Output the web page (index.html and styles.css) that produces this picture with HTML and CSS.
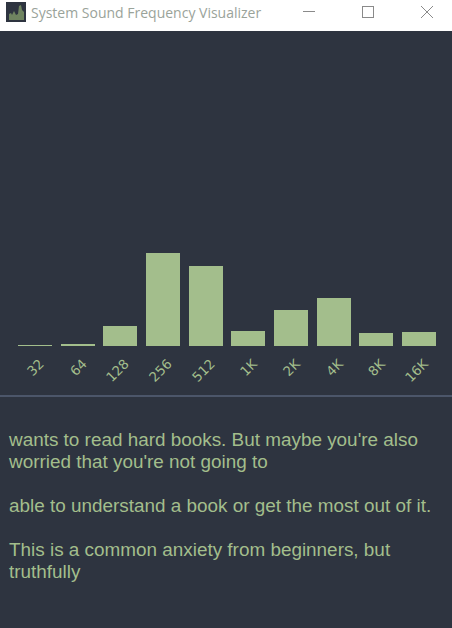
FILE: index.html
```html
<!DOCTYPE html>
<html lang="en">
<head>
    <meta charset="UTF-8">
    <meta name="viewport" content="width=device-width, initial-scale=1.0">
    <title>System Sound Frequency Visualizer</title>
    <link rel="stylesheet" href="styles.css">
</head>
<body>

<div class="titlebar">
    <svg class="app-icon" width="20" height="20" viewBox="0 0 20 20">
        <rect width="20" height="20" fill="#2e3440"/>
        <path d="M3 18V12L5 11L6 13L8 9L10 13L12 12L13 4L15 3L16 8L18 10V18Z" fill="#6f8460"/>
    </svg>
    <span class="title">System Sound Frequency Visualizer</span>
    <div class="controls">
        <svg width="12" height="12" viewBox="0 0 12 12"><path d="M0 5.5H12" stroke="#8a8a8a" fill="none"/></svg>
        <svg width="12" height="12" viewBox="0 0 12 12"><rect x="0.5" y="0.5" width="11" height="11" stroke="#8a8a8a" fill="none"/></svg>
        <svg width="12" height="12" viewBox="0 0 12 12"><path d="M0 0L12 12M12 0L0 12" stroke="#8a8a8a" fill="none"/></svg>
    </div>
</div>

<div class="chart">
    <div class="col"><div class="bar" style="height: 1px"></div><span class="label">32</span></div>
    <div class="col"><div class="bar" style="height: 2px"></div><span class="label">64</span></div>
    <div class="col"><div class="bar" style="height: 20px"></div><span class="label">128</span></div>
    <div class="col"><div class="bar" style="height: 93px"></div><span class="label">256</span></div>
    <div class="col"><div class="bar" style="height: 80px"></div><span class="label">512</span></div>
    <div class="col"><div class="bar" style="height: 15px"></div><span class="label">1K</span></div>
    <div class="col"><div class="bar" style="height: 36px"></div><span class="label">2K</span></div>
    <div class="col"><div class="bar" style="height: 48px"></div><span class="label">4K</span></div>
    <div class="col"><div class="bar" style="height: 13px"></div><span class="label">8K</span></div>
    <div class="col"><div class="bar" style="height: 14px"></div><span class="label">16K</span></div>
</div>

<div class="lyrics">
    <p>wants to read hard books. But maybe you're also worried that you're not going to</p>
    <p>able to understand a book or get the most out of it.</p>
    <p>This is a common anxiety from beginners, but truthfully</p>
</div>

</body>
</html>
```

FILE: styles.css
```css
html, body {
    height: 100%;
}
body {
    font-family: "Liberation Sans", Arial, sans-serif;
    background-color: #2e3440;
    color: #a3be8c;
    margin: 0;
    padding: 0;
    overflow: hidden;
}
.titlebar {
    display: flex;
    align-items: center;
    height: 31px;
    background-color: #fff;
    padding: 0 0 7px 6px;
    box-sizing: border-box;
}
.app-icon {
    flex: none;
}
.title {
    font-family: "Open Sans", sans-serif;
    font-size: 14px;
    color: #9aa39a;
    margin-left: 5px;
    white-space: nowrap;
}
.controls {
    display: flex;
    gap: 47px;
    margin-left: auto;
    padding-right: 19px;
}
.chart {
    display: flex;
    align-items: flex-end;
    gap: 8.67px;
    height: 364px;
    padding: 0 16px 0 18px;
    border-bottom: 2px solid #4c566a;
    box-sizing: content-box;
}
.col {
    display: flex;
    flex-direction: column;
    align-items: center;
    width: 34px;
    height: 100%;
    justify-content: flex-end;
}
.bar {
    width: 34px;
    background-color: #a3be8c;
    flex: none;
}
.label {
    font-family: "DejaVu Sans", sans-serif;
    font-size: 13.3px;
    line-height: 14px;
    display: flex;
    justify-content: flex-end;
    align-self: flex-start;
    width: 24px;
    height: 14px;
    margin: 9px 0 26px;
    transform: rotate(-45deg);
    transform-origin: right center;
    white-space: nowrap;
    color: #a3be8c;
}
.lyrics {
    padding: 32px 9px 0;
    font-size: 18.9px;
    line-height: 22px;
}
.lyrics p {
    margin: 0 0 22px;
}
```
